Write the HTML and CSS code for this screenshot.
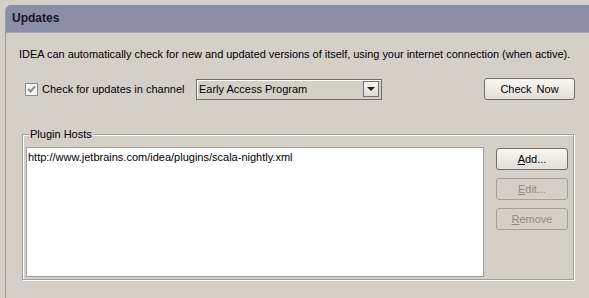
FILE: index.html
```html
<!DOCTYPE html>
<html lang="en">
<head>
  <meta charset="UTF-8" />
  <title>Updates</title>
  <link rel="stylesheet" href="styles.css">
</head>
<body>
  <div class="panel">
    <div class="panel-header">Updates</div>
    <div class="panel-body">
      <p class="desc">IDEA can automatically check for new and updated versions of itself, using your internet connection (when active).</p>

      <div class="channel-row">
        <label class="check">
          <span class="checkbox">
            <svg width="11" height="11" viewBox="0 0 11 11"><path d="M2 5 L4.5 7.5 L9 2.5" fill="none" stroke="#8c8c8c" stroke-width="2"/></svg>
          </span>
          Check for updates in channel
        </label>
        <div class="combo">
          <span class="combo-text">Early Access Program</span>
          <span class="combo-arrow">
            <svg width="8" height="5" viewBox="0 0 8 5"><path d="M0 0 H8 L4 4 Z" fill="#222"/></svg>
          </span>
        </div>
        <button class="btn check-now">Check Now</button>
      </div>

      <div class="groupbox">
        <span class="group-title">Plugin Hosts</span>
        <div class="group-content">
          <div class="list">
            <div class="list-item">http://www.jetbrains.com/idea/plugins/scala-nightly.xml</div>
          </div>
          <div class="side-buttons">
            <button class="btn"><u>A</u>dd...</button>
            <button class="btn" disabled><u>E</u>dit...</button>
            <button class="btn" disabled><u>R</u>emove</button>
          </div>
        </div>
      </div>
    </div>
  </div>
</body>
</html>
```

FILE: styles.css
```css
body {
  margin: 0;
  background: #d4d0c8;
  font-family: 'Liberation Sans', Arial, sans-serif;
  font-size: 11px;
  color: #000;
  height: 298px;
  overflow: hidden;
}
.panel {
  margin: 5px 0 0 5px;
  border-left: 1px solid #a09e98;
  border-top-left-radius: 6px;
  height: 293px;
}
.panel-header {
  background: #8a8ea7;
  height: 27px;
  border-top-left-radius: 5px;
  border-bottom: 1px solid #a4a7b8;
  font-weight: bold;
  font-size: 12px;
  color: #14142a;
  line-height: 27px;
  padding-left: 6px;
}
.panel-body {
  padding: 0 14px 0 13px;
}
.desc {
  margin: 15px 0 0 0;
  line-height: 13px;
  white-space: nowrap;
  letter-spacing: -0.03px;
}
.channel-row {
  display: flex;
  align-items: center;
  margin-top: 17px;
  height: 22px;
  padding-left: 6px;
}
.check {
  display: flex;
  align-items: center;
  gap: 4px;
  width: 171px;
}
.checkbox {
  width: 11px;
  height: 11px;
  border: 1px solid #8c8c8c;
  background: #f4f4f2;
  display: flex;
}
.combo {
  width: 180px;
  height: 19px;
  border: 1px solid #6e6e6e;
  box-shadow: inset 1px 1px 0 #fff;
  display: flex;
  align-items: center;
  justify-content: space-between;
  padding: 0 2px 0 2px;
}
.combo-arrow {
  width: 14px;
  height: 14px;
  border: 1px solid #707070;
  background: linear-gradient(#f6f5f1, #dedbd3);
  display: flex;
  align-items: center;
  justify-content: center;
}
.btn {
  font-family: 'Liberation Sans', Arial, sans-serif;
  font-size: 11px;
  color: #000;
  background: linear-gradient(#f8f7f3, #e2dfd8);
  border: 1px solid #6f6f6f;
  border-radius: 3px;
  height: 22px;
  padding: 0;
}
.btn:disabled {
  color: #8e8c85;
  border-color: #a3a199;
  background: #d4d0c8;
}
.check-now {
  width: 91px;
  margin-left: auto;
  word-spacing: 2px;
}
.groupbox {
  position: relative;
  margin: 34px 1px 0 3px;
  border: 1px solid #a09e98;
  box-shadow: 1px 1px 0 #fff, inset 1px 1px 0 #fff;
  height: 144px;
}
.group-title {
  position: absolute;
  top: -7px;
  left: 6px;
  background: #d4d0c8;
  padding: 0 1px;
  line-height: 13px;
}
.group-content {
  display: flex;
  padding: 12px 0 0 3px;
}
.list {
  width: 456px;
  height: 128px;
  background: #fff;
  border: 1px solid #a09e98;
}
.list-item {
  padding: 3px 0 0 1px;
  line-height: 13px;
}
.side-buttons {
  display: flex;
  flex-direction: column;
  gap: 8px;
  margin-left: 12px;
  padding-top: 1px;
}
.side-buttons .btn {
  width: 72px;
}
```
